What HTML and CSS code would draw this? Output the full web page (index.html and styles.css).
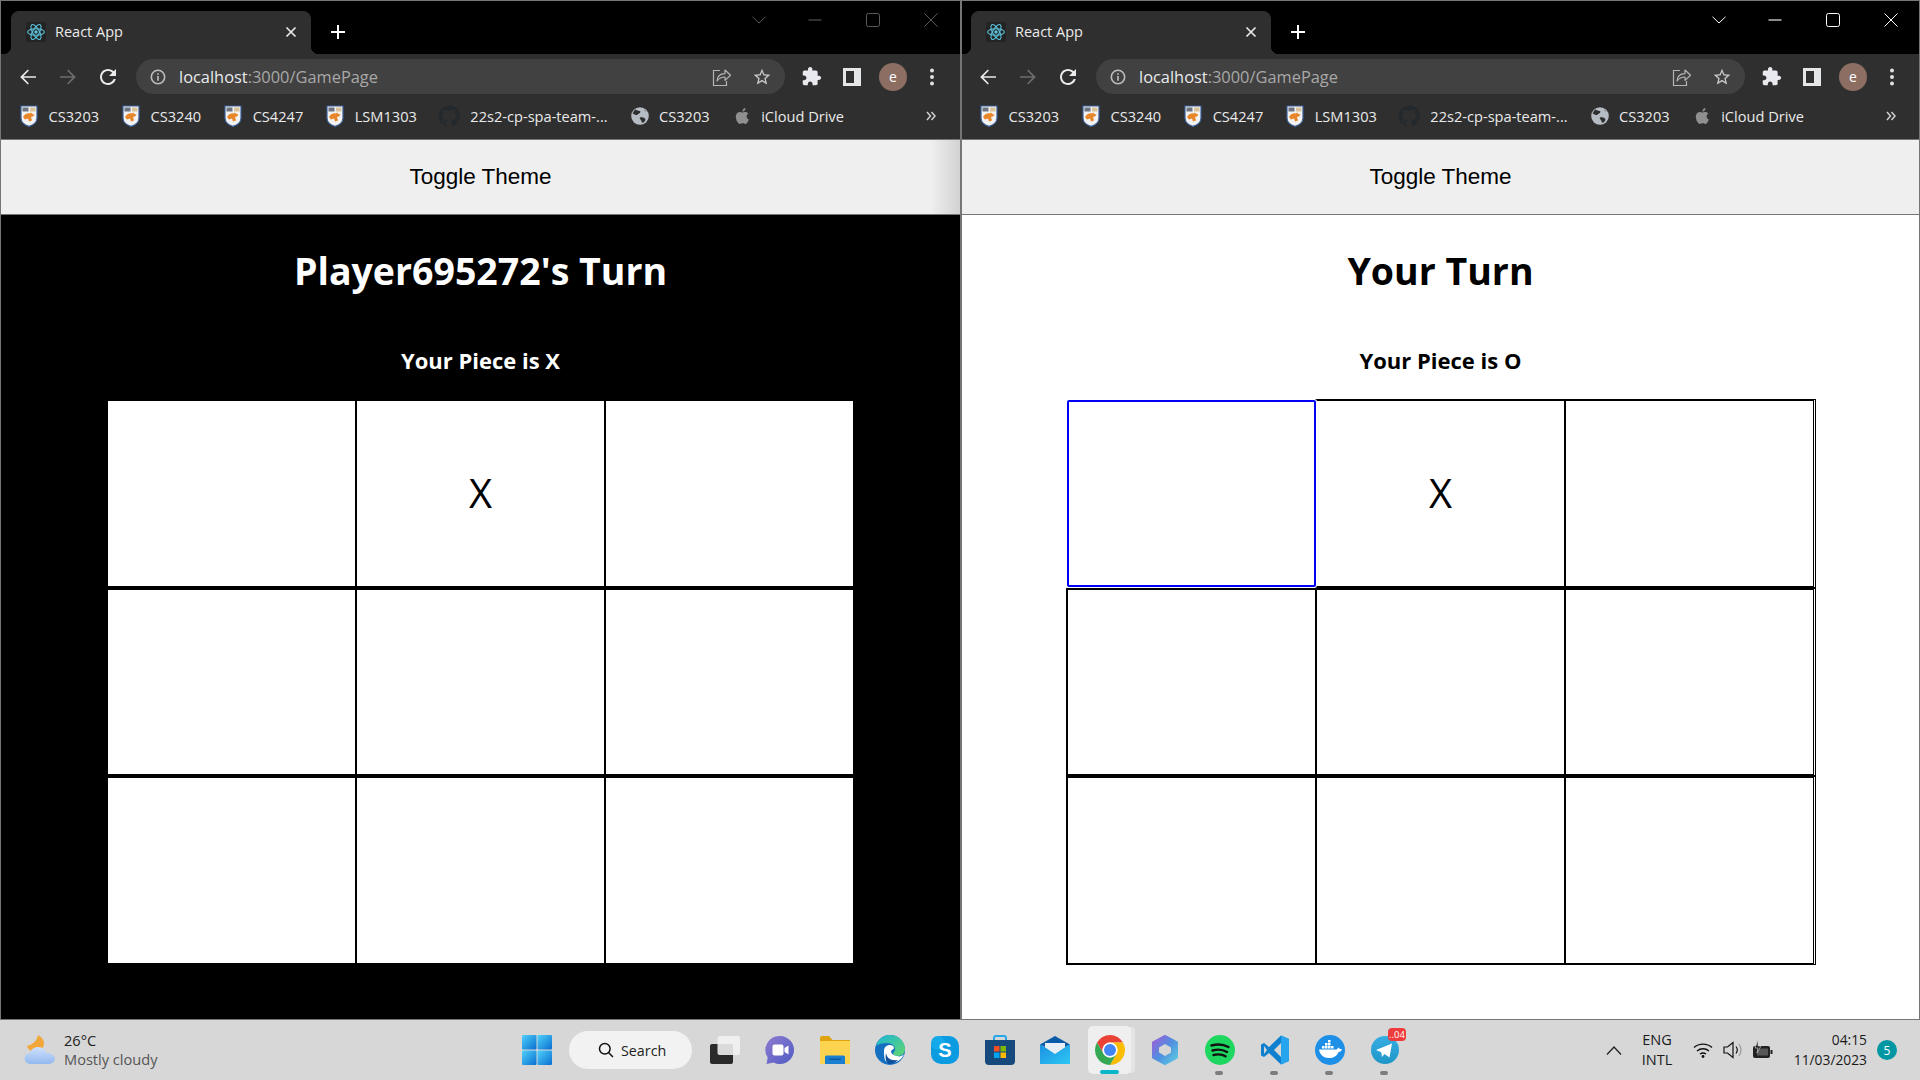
FILE: index.html
```html
<!DOCTYPE html>
<html lang="en">
<head>
<meta charset="utf-8">
<title>React App</title>
<link rel="stylesheet" href="styles.css">
</head>
<body>
<svg class="defs" aria-hidden="true">
  <defs>
    <linearGradient id="winG" x1="0" y1="0" x2="1" y2="1"><stop offset="0" stop-color="#4fd0fb"/><stop offset="1" stop-color="#0a6fd0"/></linearGradient>
    <linearGradient id="edgeG" x1="0" y1="0" x2="1" y2="1"><stop offset="0" stop-color="#1bb6d8"/><stop offset="1" stop-color="#62d66d"/></linearGradient>
    <linearGradient id="chatG" x1="0" y1="0" x2="1" y2="1"><stop offset="0" stop-color="#8f7bd0"/><stop offset="1" stop-color="#4f5cc4"/></linearGradient>
    <linearGradient id="cloudG" x1="0" y1="0" x2="0" y2="1"><stop offset="0" stop-color="#cfe0fb"/><stop offset="1" stop-color="#93b9ef"/></linearGradient>
    <linearGradient id="m365G" x1="0" y1="0" x2="1" y2="1"><stop offset="0" stop-color="#a35cd6"/><stop offset=".5" stop-color="#4f8fe0"/><stop offset="1" stop-color="#5ed0e0"/></linearGradient>
    <linearGradient id="tgG" x1="0" y1="0" x2="0" y2="1"><stop offset="0" stop-color="#37aee2"/><stop offset="1" stop-color="#1e96c8"/></linearGradient>
    <linearGradient id="mailG" x1="0" y1="0" x2="1" y2="1"><stop offset="0" stop-color="#1a8fe0"/><stop offset="1" stop-color="#2ec8f5"/></linearGradient>

    <symbol id="i-react" viewBox="0 0 20 20"><rect width="20" height="20" rx="2" fill="#232323"/><g fill="none" stroke="#5cc4dc" stroke-width="1.1"><ellipse cx="10" cy="10" rx="8.4" ry="3.3"/><ellipse cx="10" cy="10" rx="8.4" ry="3.3" transform="rotate(60 10 10)"/><ellipse cx="10" cy="10" rx="8.4" ry="3.3" transform="rotate(120 10 10)"/></g><circle cx="10" cy="10" r="1.7" fill="#5cc4dc"/></symbol>
    <symbol id="i-close" viewBox="0 0 12 12"><path d="M1.5 1.5l9 9M10.5 1.5l-9 9" fill="none" stroke="currentColor" stroke-width="1.6"/></symbol>
    <symbol id="i-plus" viewBox="0 0 16 16"><path d="M8 1v14M1 8h14" fill="none" stroke="currentColor" stroke-width="2"/></symbol>
    <symbol id="i-back" viewBox="0 0 24 24"><path d="M20 11.2H7.4l5.5-5.6L11.8 4.4 4.2 12l7.6 7.6 1.1-1.2-5.5-5.6H20z" fill="currentColor"/></symbol>
    <symbol id="i-fwd" viewBox="0 0 24 24"><path d="M4 11.2h12.6l-5.5-5.6 1.1-1.2 7.6 7.6-7.6 7.6-1.1-1.2 5.5-5.6H4z" fill="currentColor"/></symbol>
    <symbol id="i-reload" viewBox="0 0 24 24"><path d="M17.65 6.35C16.2 4.9 14.21 4 12 4c-4.42 0-7.99 3.58-7.99 8s3.57 8 7.99 8c3.73 0 6.84-2.55 7.73-6h-2.08c-.82 2.33-3.04 4-5.65 4-3.31 0-6-2.69-6-6s2.69-6 6-6c1.66 0 3.14.69 4.22 1.78L13 11h7V4l-2.35 2.35z" fill="currentColor"/></symbol>
    <symbol id="i-info" viewBox="0 0 16 16"><circle cx="8" cy="8" r="6.7" fill="none" stroke="currentColor" stroke-width="1.6"/><path d="M7.2 4.2h1.6v1.6H7.2zM7.2 7h1.6v4.8H7.2z" fill="currentColor"/></symbol>
    <symbol id="i-share" viewBox="0 0 20 20"><path d="M8 3.5H1.5v15h13V14" fill="none" stroke="currentColor" stroke-width="1.2"/><path d="M5 14c.3-5 3.4-7.4 8-7.4V3l5.5 5.2-5.5 5.2v-3.4c-3.6 0-6 1.2-8 4z" fill="none" stroke="currentColor" stroke-width="1.2" stroke-linejoin="round"/></symbol>
    <symbol id="i-star" viewBox="0 0 24 24"><path d="M22 9.24l-7.19-.62L12 2 9.19 8.63 2 9.24l5.46 4.73L5.82 21 12 17.27 18.18 21l-1.63-7.03L22 9.24zM12 15.4l-3.76 2.27 1-4.28-3.32-2.88 4.38-.38L12 6.1l1.71 4.04 4.38.38-3.32 2.88 1 4.28L12 15.4z" fill="currentColor"/></symbol>
    <symbol id="i-puzzle" viewBox="0 0 24 24"><path d="M20.5 11H19V7c0-1.1-.9-2-2-2h-4V3.5C13 2.12 11.88 1 10.5 1S8 2.12 8 3.5V5H4c-1.1 0-1.99.9-1.99 2v3.8H3.5c1.49 0 2.7 1.21 2.7 2.7s-1.21 2.7-2.7 2.7H2V20c0 1.1.9 2 2 2h3.8v-1.5c0-1.49 1.21-2.7 2.7-2.7 1.49 0 2.7 1.21 2.7 2.7V22H17c1.1 0 2-.9 2-2v-4h1.5c1.38 0 2.5-1.12 2.5-2.5S21.88 11 20.5 11z" fill="currentColor"/></symbol>
    <symbol id="i-panel" viewBox="0 0 18 18"><rect width="18" height="18" fill="#e4e6e8"/><rect x="3" y="3" width="8" height="12" fill="#2f2f2f"/></symbol>
    <symbol id="i-kebab" viewBox="0 0 6 18"><circle cx="3" cy="2.6" r="2" fill="currentColor"/><circle cx="3" cy="9" r="2" fill="currentColor"/><circle cx="3" cy="15.4" r="2" fill="currentColor"/></symbol>
    <symbol id="i-chev" viewBox="0 0 14 8"><path d="M.5.8L7 7l6.5-6.2" fill="none" stroke="currentColor" stroke-width="1"/></symbol>
    <symbol id="i-min" viewBox="0 0 14 14"><path d="M.5 7h13" stroke="currentColor" stroke-width="1.1"/></symbol>
    <symbol id="i-max" viewBox="0 0 14 14"><rect x=".5" y=".5" width="13" height="13" rx="2" fill="none" stroke="currentColor" stroke-width="1"/></symbol>
    <symbol id="i-x" viewBox="0 0 14 14"><path d="M.5.5l13 13M13.5.5l-13 13" fill="none" stroke="currentColor" stroke-width="1"/></symbol>
    <symbol id="i-crest" viewBox="0 0 18 22"><path d="M1 1h16v12c0 4.5-3.6 7-8 8.4C4.600 20 1 17.500 1 13z" fill="#f2f2f2" stroke="#3a5f98" stroke-width="1.2"/><rect x="2.500" y="2.500" width="6" height="4" fill="#6b7480"/><rect x="10" y="2.500" width="5.500" height="4" fill="#d9c39a"/><path d="M3 12c2-3.500 5-4 7-3.500l1-1 1.500 1.500 2 .5-1.500 2-2 .5 1 3.500-3 1-1-3-3 1z" fill="#e8862a"/></symbol>
    <symbol id="i-github" viewBox="0 0 24 24"><path d="M12 .5A11.500 11.500 0 0 0 8.400 22.900c.6.100.8-.2.800-.6v-2c-3.200.7-3.900-1.500-3.900-1.500-.5-1.300-1.300-1.700-1.300-1.700-1-.7.100-.7.100-.7 1.200.1 1.800 1.200 1.800 1.200 1 1.800 2.700 1.300 3.400 1 .1-.8.400-1.300.7-1.600-2.600-.3-5.300-1.300-5.300-5.700 0-1.300.5-2.300 1.200-3.100-.1-.3-.5-1.500.1-3.100 0 0 1-.3 3.200 1.200a11 11 0 0 1 5.800 0c2.200-1.500 3.200-1.200 3.200-1.200.6 1.600.2 2.800.1 3.100.8.800 1.200 1.900 1.200 3.100 0 4.400-2.700 5.400-5.300 5.700.4.400.8 1.100.8 2.200v3.200c0 .3.200.7.800.6A11.500 11.500 0 0 0 12 .5z" fill="#24292e"/></symbol>
    <symbol id="i-globe" viewBox="0 0 18 18"><circle cx="9" cy="9" r="8.800" fill="#b6bcc3"/><path d="M4 2.500c2 .5 3 1.500 4.500 1.500s1 2-.5 2.500-1.500 2-3 1.500S2 6 1.500 6.500M9 10.500c2-.8 4 0 5 1s0 3-1.500 4-2-1-2.500-2.200-2-2-1-2.800zM13 2.500c.5 1.500 2 2 3 3" fill="#2f2f2f"/></symbol>
    <symbol id="i-apple" viewBox="0 0 18 20"><path d="M13.600 10.600c0-2 1.600-3 1.700-3.100-1-1.400-2.400-1.600-2.900-1.600-1.200-.1-2.400.7-3 .7s-1.600-.7-2.600-.7c-1.300 0-2.600.8-3.300 2-1.400 2.400-.4 6 1 8 .7 1 1.500 2 2.500 2s1.400-.6 2.600-.6 1.500.6 2.600.6 1.800-1 2.500-2c.8-1.100 1.100-2.200 1.100-2.300 0 0-2.200-.8-2.200-3zM11.700 4.500c.5-.7.900-1.600.8-2.500-.8 0-1.700.5-2.300 1.200-.5.600-.9 1.500-.8 2.400.9.100 1.800-.4 2.300-1.100z" fill="#8f8f8f"/></symbol>
    <symbol id="i-more" viewBox="0 0 10 10"><path d="M1 1l3.500 4L1 9M5.500 1L9 5 5.500 9" fill="none" stroke="currentColor" stroke-width="1.500"/></symbol>

    <symbol id="t-weather" viewBox="0 0 32 30"><path d="M14 0c-1 5-4 9-11 11 1 3 4 6 8 6 5 0 9-4 9-9 0-3-2-6-6-8z" fill="#f3a73a"/><path d="M7 29c-4 0-6.500-2.500-6.500-5.500S3 18.500 6 18c1-3.500 4-6 8-6 4.500 0 7.500 3 8.500 6 5 0 8.500 2.500 8.500 5.500s-3 5.500-7 5.500z" fill="url(#cloudG)"/></symbol>
    <symbol id="t-win" viewBox="0 0 30 30"><rect width="14.500" height="14.500" rx="1" fill="url(#winG)"/><rect x="15.500" width="14.500" height="14.500" rx="1" fill="url(#winG)"/><rect y="15.500" width="14.500" height="14.500" rx="1" fill="url(#winG)"/><rect x="15.500" y="15.500" width="14.500" height="14.500" rx="1" fill="url(#winG)"/></symbol>
    <symbol id="t-search" viewBox="0 0 16 16"><circle cx="6.800" cy="6.800" r="5.300" fill="none" stroke="currentColor" stroke-width="1.500"/><path d="M10.500 10.500l4.500 4.500" stroke="currentColor" stroke-width="1.500"/></symbol>
    <symbol id="t-taskview" viewBox="0 0 30 28"><rect y="8" width="23" height="20" rx="2" fill="#2a2a2a"/><rect x="7.500" width="22.500" height="19" rx="2" fill="#f2f2f2" fill-opacity=".88"/></symbol>
    <symbol id="t-chat" viewBox="0 0 30 30"><path d="M15 1a14 14 0 1 1-6.500 26.400L1.500 29l1.200-6.400A14 14 0 0 1 15 1z" fill="url(#chatG)"/><rect x="7.500" y="9.500" width="11" height="11" rx="2" fill="#fff"/><path d="M19.500 13l4-2.500v9l-4-2.500z" fill="#fff"/></symbol>
    <symbol id="t-folder" viewBox="0 0 30 28"><path d="M0 2a2 2 0 0 1 2-2h7l3.500 4H30v4H0z" fill="#e0a30f"/><path d="M0 5h30v23H0z" fill="#fbd34f"/><path d="M5 21a1.500 1.500 0 0 1 1.500-1.500h17A1.500 1.500 0 0 1 25 21v7H5z" fill="#1a7fd0"/><rect x="9" y="22.500" width="12" height="1.500" fill="#0d5aa0"/></symbol>
    <symbol id="t-edge" viewBox="0 0 30 30"><circle cx="15" cy="15" r="15" fill="#1570c2"/><path d="M1 11C3 4 9 0 15 0c8 0 15 6 15 14 0 4-3 7-7 7-3 0-5-1-5-3 1-1 2-2 2-4 0-3-3-6-8-6-5 0-9 1-11 3z" fill="url(#edgeG)"/><path d="M9 16c0-4 3-6 6-6 2 0 4 1 4 3 0 1-1 1-2 2-2 1-1 5 5 6 3 1 5 0 7-2-2 6-8 9-13 9-3 0-5-1-6-3-1-3-1-6-1-9z" fill="#fff"/><path d="M11 18c1 5 4 8 12 7-3 3-6 4-8 4-4 0-5-6-4-11z" fill="#0c4f9c"/></symbol>
    <symbol id="t-skype" viewBox="0 0 28 28"><rect width="28" height="28" rx="10" fill="#0a9be0"/><circle cx="7" cy="7" r="7" fill="#14a9ea"/><text x="14" y="21" text-anchor="middle" font-family="Liberation Sans" font-weight="700" font-size="20" fill="#fff">S</text></symbol>
    <symbol id="t-store" viewBox="0 0 30 30"><path d="M9 6V3a2 2 0 0 1 2-2h8a2 2 0 0 1 2 2v3" fill="none" stroke="#27a7e8" stroke-width="2"/><path d="M0 5h30v21a4 4 0 0 1-4 4H4a4 4 0 0 1-4-4z" fill="#164a7c"/><rect x="9" y="11" width="5.500" height="5.500" fill="#f25022"/><rect x="15.500" y="11" width="5.500" height="5.500" fill="#7fba00"/><rect x="9" y="17.500" width="5.500" height="5.500" fill="#00a4ef"/><rect x="15.500" y="17.500" width="5.500" height="5.500" fill="#ffb900"/></symbol>
    <symbol id="t-mail" viewBox="0 0 30 28"><path d="M15 0l15 8.500L15 16 0 8.500z" fill="#0b5ba8"/><path d="M5 7h20v7l-10 5-10-5z" fill="#e8eef4"/><path d="M0 8l15 10L30 8v20H0z" fill="url(#mailG)"/></symbol>
    <symbol id="t-chrome" viewBox="4 4 40 40"><path d="M6.680 14A20 20 0 0 1 41.320 14H24A10 10 0 0 0 15.340 29z" fill="#ea4335"/><path d="M41.320 14A20 20 0 0 1 24 44L32.660 29A10 10 0 0 0 24 14z" fill="#fbbc04"/><path d="M24 44A20 20 0 0 1 6.680 14L15.340 29A10 10 0 0 0 32.660 29z" fill="#34a853"/><circle cx="24" cy="24" r="10" fill="#fff"/><circle cx="24" cy="24" r="8" fill="#4285f4"/></symbol>
    <symbol id="t-m365" viewBox="0 0 28 30"><path d="M14 1l12 6.500v15L14 29 2 22.500v-15z" fill="url(#m365G)" stroke="url(#m365G)" stroke-width="2" stroke-linejoin="round"/><path d="M14 9l6 3.500v5L14 21l-6-3.500v-5z" fill="#d6d6d6"/></symbol>
    <symbol id="t-spotify" viewBox="0 0 30 30"><circle cx="15" cy="15" r="15" fill="#1ed760"/><path d="M6.500 10.500c6-1.700 12-1.200 17 1.500M7.500 15.500c5-1.400 10.500-.9 14.500 1.500M8.500 20c4.500-1 9-.6 12 1.300" fill="none" stroke="#111" stroke-width="2.400" stroke-linecap="round"/></symbol>
    <symbol id="t-vscode" viewBox="0 0 30 30"><path d="M21 .5L29 4v22l-8 3.500L9 18l-5 4-3-1.500V9.500L4 8l5 4z" fill="#0f7fcf"/><path d="M21 .5L29 4v22l-8 3.500z" fill="#26a5ee"/><path d="M21 8l-7 7 7 7z" fill="#d6d6d6"/><path d="M4 11l3 4-3 4z" fill="#d6d6d6"/></symbol>
    <symbol id="t-docker" viewBox="0 0 30 30"><circle cx="15" cy="15" r="15" fill="#1d8fe6"/><path d="M4 14.500h17c1 0 1.500-.5 2-2 .8.200 1.500.8 1.800 1.600 1 0 1.700 0 2.200.4-1 2-2.500 2.500-3.500 2.500-1.500 4-5 6-9.500 6-5.500 0-9-3-10-8.500z" fill="#fff"/><path d="M7 11h2.500v2.500H7zM10 11h2.500v2.500H10zM13 11h2.500v2.500H13zM16 11h2.500v2.500H16zM10 8h2.500v2.500H10zM13 8h2.500v2.500H13zM13 5h2.500v2.500H13z" fill="#fff"/></symbol>
    <symbol id="t-tele" viewBox="0 0 28 30"><circle cx="14" cy="15" r="14" fill="url(#tgG)"/><path d="M5 15l16-6.500-2.500 14-5-3.500-2.500 3-.8-4.800z" fill="#fff"/></symbol>
    <symbol id="t-up" viewBox="0 0 16 9"><path d="M1 8.500L8 1l7 7.500" fill="none" stroke="currentColor" stroke-width="1.300"/></symbol>
    <symbol id="t-wifi" viewBox="0 0 20 16"><path d="M1 5.500C6 1 14 1 19 5.500M4 9c3.500-3 8.500-3 12 0M7 12c1.800-1.300 4.200-1.300 6 0" fill="none" stroke="currentColor" stroke-width="1.400"/><circle cx="10" cy="14.500" r="1.400" fill="currentColor"/></symbol>
    <symbol id="t-vol" viewBox="0 0 20 18"><path d="M1 6h3.500L10 1.500v15L4.500 12H1z" fill="none" stroke="currentColor" stroke-width="1.200"/><path d="M13 5.500c1.500 2 1.500 5 0 7" fill="none" stroke="currentColor" stroke-width="1.200"/><path d="M16 3c2.600 3.500 2.600 8.500 0 12" fill="none" stroke="#999" stroke-width="1.200"/></symbol>
    <symbol id="t-batt" viewBox="0 0 22 20"><rect x="1" y="6" width="17" height="12" rx="2" fill="#222"/><rect x="18.500" y="10" width="2" height="4" fill="#222"/><rect x="5" y="8.500" width="11" height="7" fill="#d6d6d6" fill-opacity=".3"/><path d="M6 0L3 8h3l-1 5 4-7H6z" fill="#222" stroke="#d6d6d6" stroke-width=".6"/></symbol>
  </defs>
</svg>

<div class="desktop">
  <div class="windows">

    <section class="window theme-dark">
      <div class="tabstrip">
        <div class="tab">
          <svg class="tab-icon"><use href="#i-react"/></svg>
          <span class="tab-title">React App</span>
          <svg class="tab-close"><use href="#i-close"/></svg>
        </div>
        <svg class="new-tab"><use href="#i-plus"/></svg>
        <div class="win-controls">
          <svg class="wc-chev"><use href="#i-chev"/></svg>
          <svg class="wc-min"><use href="#i-min"/></svg>
          <svg class="wc-max"><use href="#i-max"/></svg>
          <svg class="wc-x"><use href="#i-x"/></svg>
        </div>
      </div>
      <div class="toolbar">
        <svg class="nav nav-on"><use href="#i-back"/></svg>
        <svg class="nav nav-off"><use href="#i-fwd"/></svg>
        <svg class="nav nav-on"><use href="#i-reload"/></svg>
        <div class="omnibox">
          <svg class="omni-info"><use href="#i-info"/></svg>
          <span class="url"><span class="url-host">localhost</span>:3000/GamePage</span>
          <svg class="omni-share"><use href="#i-share"/></svg>
          <svg class="omni-star"><use href="#i-star"/></svg>
        </div>
        <svg class="tool-puzzle"><use href="#i-puzzle"/></svg>
        <svg class="tool-panel"><use href="#i-panel"/></svg>
        <div class="avatar">e</div>
        <svg class="tool-kebab"><use href="#i-kebab"/></svg>
      </div>
      <div class="bookmarks">
        <div class="bm"><svg class="bm-icon"><use href="#i-crest"/></svg><span>CS3203</span></div>
        <div class="bm"><svg class="bm-icon"><use href="#i-crest"/></svg><span>CS3240</span></div>
        <div class="bm"><svg class="bm-icon"><use href="#i-crest"/></svg><span>CS4247</span></div>
        <div class="bm"><svg class="bm-icon"><use href="#i-crest"/></svg><span>LSM1303</span></div>
        <div class="bm"><svg class="bm-icon bm-wide"><use href="#i-github"/></svg><span>22s2-cp-spa-team-...</span></div>
        <div class="bm"><svg class="bm-icon"><use href="#i-globe"/></svg><span>CS3203</span></div>
        <div class="bm"><svg class="bm-icon"><use href="#i-apple"/></svg><span>iCloud Drive</span></div>
        <svg class="bm-more"><use href="#i-more"/></svg>
      </div>
      <main class="page">
        <button class="toggle">Toggle Theme</button>
        <h1 class="turn">Player695272's Turn</h1>
        <h3 class="piece">Your Piece is X</h3>
        <div class="board">
          <button class="cell"></button><button class="cell">X</button><button class="cell cell-end"></button>
          <button class="cell"></button><button class="cell"></button><button class="cell cell-end"></button>
          <button class="cell"></button><button class="cell"></button><button class="cell cell-end"></button>
        </div>
      </main>
    </section>

    <section class="window theme-light">
      <div class="tabstrip">
        <div class="tab">
          <svg class="tab-icon"><use href="#i-react"/></svg>
          <span class="tab-title">React App</span>
          <svg class="tab-close"><use href="#i-close"/></svg>
        </div>
        <svg class="new-tab"><use href="#i-plus"/></svg>
        <div class="win-controls">
          <svg class="wc-chev"><use href="#i-chev"/></svg>
          <svg class="wc-min"><use href="#i-min"/></svg>
          <svg class="wc-max"><use href="#i-max"/></svg>
          <svg class="wc-x"><use href="#i-x"/></svg>
        </div>
      </div>
      <div class="toolbar">
        <svg class="nav nav-on"><use href="#i-back"/></svg>
        <svg class="nav nav-off"><use href="#i-fwd"/></svg>
        <svg class="nav nav-on"><use href="#i-reload"/></svg>
        <div class="omnibox">
          <svg class="omni-info"><use href="#i-info"/></svg>
          <span class="url"><span class="url-host">localhost</span>:3000/GamePage</span>
          <svg class="omni-share"><use href="#i-share"/></svg>
          <svg class="omni-star"><use href="#i-star"/></svg>
        </div>
        <svg class="tool-puzzle"><use href="#i-puzzle"/></svg>
        <svg class="tool-panel"><use href="#i-panel"/></svg>
        <div class="avatar">e</div>
        <svg class="tool-kebab"><use href="#i-kebab"/></svg>
      </div>
      <div class="bookmarks">
        <div class="bm"><svg class="bm-icon"><use href="#i-crest"/></svg><span>CS3203</span></div>
        <div class="bm"><svg class="bm-icon"><use href="#i-crest"/></svg><span>CS3240</span></div>
        <div class="bm"><svg class="bm-icon"><use href="#i-crest"/></svg><span>CS4247</span></div>
        <div class="bm"><svg class="bm-icon"><use href="#i-crest"/></svg><span>LSM1303</span></div>
        <div class="bm"><svg class="bm-icon bm-wide"><use href="#i-github"/></svg><span>22s2-cp-spa-team-...</span></div>
        <div class="bm"><svg class="bm-icon"><use href="#i-globe"/></svg><span>CS3203</span></div>
        <div class="bm"><svg class="bm-icon"><use href="#i-apple"/></svg><span>iCloud Drive</span></div>
        <svg class="bm-more"><use href="#i-more"/></svg>
      </div>
      <main class="page">
        <button class="toggle">Toggle Theme</button>
        <h1 class="turn">Your Turn</h1>
        <h3 class="piece">Your Piece is O</h3>
        <div class="board">
          <button class="cell cell-focus"></button><button class="cell">X</button><button class="cell cell-end"></button>
          <button class="cell"></button><button class="cell"></button><button class="cell cell-end"></button>
          <button class="cell"></button><button class="cell"></button><button class="cell cell-end"></button>
        </div>
      </main>
    </section>
  </div>

  <footer class="taskbar">
    <div class="weather">
      <svg class="weather-icon"><use href="#t-weather"/></svg>
      <div class="weather-text"><span class="weather-temp">26°C</span><span class="weather-desc">Mostly cloudy</span></div>
    </div>
    <div class="apps">
      <div class="app"><svg class="ic-win"><use href="#t-win"/></svg></div>
      <div class="search"><svg class="search-icon"><use href="#t-search"/></svg><span>Search</span></div>
      <div class="app"><svg class="ic-30"><use href="#t-taskview"/></svg></div>
      <div class="app"><svg class="ic-30"><use href="#t-chat"/></svg></div>
      <div class="app"><svg class="ic-30"><use href="#t-folder"/></svg></div>
      <div class="app"><svg class="ic-30"><use href="#t-edge"/></svg></div>
      <div class="app"><svg class="ic-28"><use href="#t-skype"/></svg></div>
      <div class="app"><svg class="ic-30"><use href="#t-store"/></svg></div>
      <div class="app"><svg class="ic-30"><use href="#t-mail"/></svg></div>
      <div class="app app-active"><svg class="ic-30"><use href="#t-chrome"/></svg></div>
      <div class="app"><svg class="ic-28"><use href="#t-m365"/></svg></div>
      <div class="app app-open"><svg class="ic-30"><use href="#t-spotify"/></svg></div>
      <div class="app app-open"><svg class="ic-30"><use href="#t-vscode"/></svg></div>
      <div class="app app-open"><svg class="ic-30"><use href="#t-docker"/></svg></div>
      <div class="app app-open"><svg class="ic-28"><use href="#t-tele"/></svg><span class="tele-badge">..04</span></div>
    </div>
    <div class="tray">
      <svg class="tray-up"><use href="#t-up"/></svg>
      <div class="lang"><span>ENG</span><span>INTL</span></div>
      <svg class="tray-wifi"><use href="#t-wifi"/></svg>
      <svg class="tray-vol"><use href="#t-vol"/></svg>
      <svg class="tray-batt"><use href="#t-batt"/></svg>
      <div class="clock"><span>04:15</span><span>11/03/2023</span></div>
      <div class="notif">5</div>
    </div>
  </footer>
</div>
</body>
</html>
```

FILE: styles.css
```css
* { box-sizing: border-box; }
html, body { margin: 0; padding: 0; }
body { font-family: "Open Sans", "Liberation Sans", sans-serif; overflow: hidden; }
.defs { display: block; width: 0; height: 0; overflow: hidden; }
svg { display: block; flex: none; }

.desktop { width: 1920px; height: 1080px; display: flex; flex-direction: column; }
.windows { flex: none; height: 1020px; display: flex; }

.window { position: relative; display: flex; flex-direction: column; border: 1px solid #767676; height: 1020px; min-width: 0; }
.theme-dark { width: 961px; background: #000; }
.theme-light { width: 959px; background: #fff; border-left-width: 0; }
.theme-light::before { content: ""; position: absolute; left: 0; top: 0; bottom: 0; width: 1px; background: #767676; z-index: 5; }

/* tab strip */
.tabstrip { height: 53px; background: #000; display: flex; align-items: flex-end; padding-left: 10px; flex: none; }
.tab { position: relative; width: 300px; height: 43px; background: #2f2f2f; border-radius: 8px 8px 0 0; display: flex; align-items: center; padding: 0 0 2px 15px; color: #eaeaea; }
.tab::before, .tab::after { content: ""; position: absolute; bottom: 0; width: 8px; height: 8px; }
.tab::before { left: -8px; background: radial-gradient(circle at 0 0, #000 8px, #2f2f2f 8.5px); }
.tab::after { right: -8px; background: radial-gradient(circle at 100% 0, #000 8px, #2f2f2f 8.5px); }
.tab-icon { width: 20px; height: 20px; }
.tab-title { margin-left: 9px; font-size: 14.5px; flex: 1; }
.tab-close { width: 12px; height: 12px; margin-right: 14px; color: #eee; }
.new-tab { width: 16px; height: 16px; margin: 0 0 14px 19px; color: #fff; }
.win-controls { margin-left: 406px; height: 100%; display: flex; align-items: center; padding-bottom: 16px; color: #fff; flex: none; }
.theme-dark .win-controls { color: #5a5a5a; }
.wc-chev { width: 14px; height: 8px; margin-right: 42px; }
.wc-min { width: 14px; height: 14px; margin-right: 44px; }
.wc-max { width: 14px; height: 14px; margin-right: 44px; }
.wc-x { width: 14px; height: 14px; }

/* toolbar */
.toolbar { height: 45px; background: #2f2f2f; display: flex; align-items: center; padding-left: 15px; flex: none; }
.nav { width: 24px; height: 24px; margin-right: 16px; }
.nav-on { color: #e8eaed; }
.nav-off { color: #6e6e6e; }
.omnibox { width: 649px; height: 35px; background: #414141; border-radius: 18px; display: flex; align-items: center; padding-left: 14px; flex: none; }
.omni-info { width: 16px; height: 16px; color: #bdbdbd; }
.url { margin-left: 13px; font-size: 16.4px; color: #a8a8a8; flex: 1; }
.url-host { color: #e8eaed; }
.omni-share { width: 20px; height: 20px; color: #b5b5b5; margin-right: 20px; }
.omni-star { width: 20px; height: 20px; color: #c8c8c8; margin-right: 13px; }
.tool-puzzle { width: 21px; height: 21px; margin-left: 16px; color: #e8eaed; }
.tool-panel { width: 18px; height: 18px; margin-left: 21px; }
.avatar { width: 28px; height: 28px; margin-left: 18px; border-radius: 50%; background: #8d6e63; color: #fff; font-size: 14px; display: flex; align-items: center; justify-content: center; }
.tool-kebab { width: 6px; height: 18px; margin-left: 22px; color: #e0e0e0; }

/* bookmarks */
.bookmarks { height: 41px; background: #2f2f2f; display: flex; align-items: center; padding: 0 0 6px 19px; gap: 23px; color: #eaeaea; font-size: 14.6px; flex: none; border-bottom: 1px solid #767676; }
.bm { display: flex; align-items: center; gap: 10.5px; }
.bm-icon { width: 18px; height: 22px; }
.bm-wide { width: 22px; height: 22px; margin-left: -2px; }
.bm-more { width: 10px; height: 10px; color: #d0d0d0; margin-left: auto; margin-right: 24px; }
.theme-light .bm-more { margin-right: 23px; }

/* page */
.page { flex: 1; display: flex; flex-direction: column; align-items: center; min-height: 0; }
.theme-dark .page { color: #fff; }
.theme-light .page { color: #000; padding-left: 1px; }
.toggle { width: 100%; height: 75px; flex: none; border: 0; border-bottom: 1px solid #767676; background: #efefef; color: #000; font-family: "Liberation Sans", Arial, sans-serif; font-size: 22.5px; padding: 0; }
.theme-dark .toggle { background: linear-gradient(to right, #efefef 97%, #d2d2d2); }
.turn { margin: 29px 0 0; height: 54px; line-height: 54px; font-size: 37.5px; font-weight: 700; }
.piece { margin: 46px 0 0; height: 33px; line-height: 33px; font-size: 22px; font-weight: 700; }
.board { margin-top: 22px; display: grid; grid-template-columns: 249px 249px 251px; grid-template-rows: 189px 188px 189px; }
.cell { width: calc(100% + 2px); height: 100%; background: #fff; border: 2px solid #000; padding: 0 0 3px; color: #000; font-family: "Open Sans", sans-serif; font-size: 40px; font-weight: 400; position: relative; }
.cell-end { width: 100%; }
.theme-light .cell-end { width: calc(100% + 1px); border-right: 3px double #000; }
.cell-focus { z-index: 1; border-color: #fff; outline: 2px solid #0000f5; outline-offset: -3px; border-radius: 3px; }

/* taskbar */
.taskbar { flex: none; height: 60px; background: #d7d7d7; display: flex; align-items: center; color: #1a1a1a; }
.weather { width: 509px; flex: none; display: flex; align-items: center; padding-left: 24px; gap: 8px; }
.weather-icon { width: 32px; height: 30px; }
.weather-text { display: flex; flex-direction: column; font-size: 14.6px; line-height: 19.5px; }
.weather-temp { color: #222; }
.weather-desc { color: #555; }
.apps { display: flex; align-items: center; height: 100%; flex: none; }
.app { position: relative; width: 55px; height: 48px; display: flex; align-items: center; justify-content: center; flex: none; }
.ic-win { width: 30px; height: 30px; }
.ic-30 { width: 30px; height: 30px; }
.ic-28 { width: 28px; height: 30px; }
.search { width: 123px; height: 38px; margin: 0 5px; border-radius: 19px; background: #f2f2f2; display: flex; align-items: center; padding-left: 29px; gap: 7px; font-size: 14.3px; color: #222; flex: none; }
.search-icon { width: 16px; height: 16px; color: #111; }
.app-active { background: #efefef; border-radius: 5px; width: 43px; margin: 0 6px; box-shadow: 5px 0 0 -1px #e4e4e4; }
.app-active::after { content: ""; position: absolute; left: 12px; bottom: 0; width: 19px; height: 4px; border-radius: 2px; background: #0ab7c8; }
.app-open::after { content: ""; position: absolute; left: 23px; bottom: -1px; width: 8px; height: 4px; border-radius: 2px; background: #7d7d7d; }
.tele-badge { position: absolute; left: 31px; top: 2px; width: 18px; height: 13px; border-radius: 4px; background: #ee3b3b; color: #fff; font-size: 9.5px; line-height: 13px; text-align: center; }
.tray { flex: 1; display: flex; align-items: center; height: 100%; padding-left: 194px; }
.tray-up { width: 16px; height: 9px; color: #222; }
.lang { width: 38px; margin-left: 16px; display: flex; flex-direction: column; align-items: center; font-size: 14.5px; line-height: 20px; }
.tray-wifi { width: 20px; height: 16px; margin-left: 17px; color: #111; }
.tray-vol { width: 20px; height: 18px; margin-left: 10px; color: #111; }
.tray-batt { width: 22px; height: 20px; margin-left: 9px; }
.clock { width: 93px; display: flex; flex-direction: column; align-items: flex-end; font-size: 13.8px; line-height: 20px; }
.notif { width: 20px; height: 20px; margin-left: 10px; border-radius: 50%; background: #0097a4; color: #fff; font-size: 12px; display: flex; align-items: center; justify-content: center; }
```
